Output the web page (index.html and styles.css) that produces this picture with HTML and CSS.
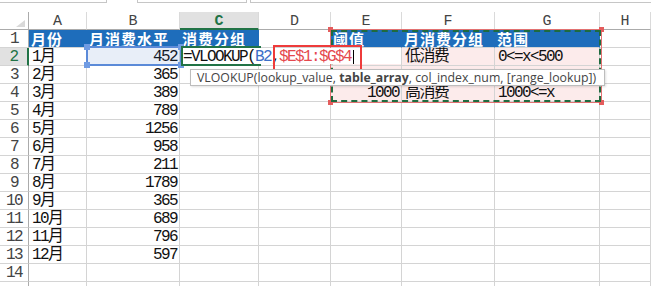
FILE: index.html
```html
<!DOCTYPE html>
<html lang="zh-CN">
<head>
<meta charset="utf-8">
<title>VLOOKUP</title>
<link rel="stylesheet" href="styles.css">
</head>
<body>
<div class="toolbar">
  <div class="tb tb-name"></div>
  <div class="tb tb-mid"></div>
  <div class="tb tb-formula"></div>
</div>
<div class="sheet">
  <div class="corner"><svg width="29" height="18" viewBox="0 0 29 18"><polygon points="25,8 25,15 16,15" fill="#d9d9d9"/></svg></div>
  <div class="hd">A</div><div class="hd">B</div><div class="hd sel">C</div><div class="hd">D</div><div class="hd">E</div><div class="hd">F</div><div class="hd">G</div><div class="hd">H</div>

  <div class="rh">1</div><div class="c th">月份</div><div class="c th">月消费水平</div><div class="c th">消费分组</div><div class="c"></div><div class="c th">阈值</div><div class="c th">月消费分组</div><div class="c th">范围</div><div class="c"></div>
  <div class="rh sel">2</div><div class="c">1月</div><div class="c num">452</div><div class="c"></div><div class="c"></div><div class="c pk"></div><div class="c pk">低消费</div><div class="c pk">0&lt;=x&lt;500</div><div class="c"></div>
  <div class="rh">3</div><div class="c">2月</div><div class="c num">365</div><div class="c"></div><div class="c"></div><div class="c pk"></div><div class="c pk"></div><div class="c pk"></div><div class="c"></div>
  <div class="rh">4</div><div class="c">3月</div><div class="c num">389</div><div class="c"></div><div class="c"></div><div class="c pk num">1000</div><div class="c pk">高消费</div><div class="c pk">1000&lt;=x</div><div class="c"></div>
  <div class="rh">5</div><div class="c">4月</div><div class="c num">789</div><div class="c"></div><div class="c"></div><div class="c"></div><div class="c"></div><div class="c"></div><div class="c"></div>
  <div class="rh">6</div><div class="c">5月</div><div class="c num">1256</div><div class="c"></div><div class="c"></div><div class="c"></div><div class="c"></div><div class="c"></div><div class="c"></div>
  <div class="rh">7</div><div class="c">6月</div><div class="c num">958</div><div class="c"></div><div class="c"></div><div class="c"></div><div class="c"></div><div class="c"></div><div class="c"></div>
  <div class="rh">8</div><div class="c">7月</div><div class="c num">211</div><div class="c"></div><div class="c"></div><div class="c"></div><div class="c"></div><div class="c"></div><div class="c"></div>
  <div class="rh">9</div><div class="c">8月</div><div class="c num">1789</div><div class="c"></div><div class="c"></div><div class="c"></div><div class="c"></div><div class="c"></div><div class="c"></div>
  <div class="rh">10</div><div class="c">9月</div><div class="c num">365</div><div class="c"></div><div class="c"></div><div class="c"></div><div class="c"></div><div class="c"></div><div class="c"></div>
  <div class="rh">11</div><div class="c">10月</div><div class="c num">689</div><div class="c"></div><div class="c"></div><div class="c"></div><div class="c"></div><div class="c"></div><div class="c"></div>
  <div class="rh">12</div><div class="c">11月</div><div class="c num">796</div><div class="c"></div><div class="c"></div><div class="c"></div><div class="c"></div><div class="c"></div><div class="c"></div>
  <div class="rh">13</div><div class="c">12月</div><div class="c num">597</div><div class="c"></div><div class="c"></div><div class="c"></div><div class="c"></div><div class="c"></div><div class="c"></div>
  <div class="rh">14</div><div class="c"></div><div class="c"></div><div class="c"></div><div class="c"></div><div class="c"></div><div class="c"></div><div class="c"></div><div class="c"></div>
  <div class="rh"></div><div class="c"></div><div class="c"></div><div class="c"></div><div class="c"></div><div class="c"></div><div class="c"></div><div class="c"></div><div class="c"></div>

  <div class="ref-range">
    <span class="rq rq-tl"></span><span class="rq rq-tr"></span><span class="rq rq-bl"></span><span class="rq rq-br"></span>
  </div>
  <div class="marquee"></div>
  <div class="ref-b2">
    <span class="bq bq-tl"></span><span class="bq bq-tr"></span><span class="bq bq-bl"></span><span class="bq bq-br"></span>
  </div>
  <div class="active"></div>
  <div class="edit">=VLOOKUP(<span class="f-blue">B2</span>,<span class="f-red">$E$1:$G$4</span><span class="caret"></span></div>
  <div class="mark"></div>
  <div class="tip">VLOOKUP(lookup_value, <b>table_array</b>, col_index_num, [range_lookup])</div>
</div>
</body>
</html>
```

FILE: styles.css
```css
html, body {
  margin: 0;
  padding: 0;
  background: #ffffff;
  overflow: hidden;
}

.toolbar {
  display: flex;
  height: 12px;
}

.tb {
  height: 2px;
  border-bottom: 1px solid #c6c6c6;
  box-sizing: content-box;
}

.tb-name {
  width: 106px;
  border-right: 1px solid #c6c6c6;
}

.tb-mid {
  width: 108px;
  margin-left: 30px;
  border-left: 1px solid #c6c6c6;
  border-right: 1px solid #c6c6c6;
}

.tb-formula {
  flex: 1;
  margin-left: 3px;
  border-left: 1px solid #c6c6c6;
}

.sheet {
  position: relative;
  display: grid;
  grid-template-columns: 29px 58px 93px 79px 72px 71px 93px 105px 51px;
  grid-auto-rows: 18px;
}

.sheet > div {
  box-sizing: border-box;
}

.corner {
  border-right: 1px solid #ababab;
  border-bottom: 1px solid #ababab;
  background: #ffffff;
}

.corner svg {
  display: block;
}

.hd {
  border-right: 1px solid #dadada;
  border-bottom: 1px solid #ababab;
  text-align: center;
  padding-top: 3px;
  font: 15px/14px "Liberation Mono", monospace;
  color: #444444;
  background: #ffffff;
}

.hd.sel {
  background: #e1e1e1;
  color: #217346;
  font-weight: bold;
  border-bottom: 2px solid #217346;
}

.rh {
  border-right: 1px solid #ababab;
  border-bottom: 1px solid #d4d4d4;
  text-align: center;
  padding-top: 2px;
  font: 16px/15px "Liberation Mono", monospace;
  letter-spacing: -1.6px;
  color: #444444;
}

.rh.sel {
  background: #e1e1e1;
  color: #217346;
  border-right: 2px solid #217346;
}

.c {
  border-right: 1px solid #d4d4d4;
  border-bottom: 1px solid #d4d4d4;
  padding: 2px 2px 0 3px;
  font: 16px/15px "Liberation Mono", "Noto Sans CJK SC", monospace;
  letter-spacing: -1.6px;
  color: #111111;
  white-space: nowrap;
}

.c.num {
  text-align: right;
  padding-right: 2px;
}

.c.th {
  background: #1e6dbb;
  border-right-color: #1e6dbb;
  color: #ffffff;
  font-weight: bold;
  font-family: "Noto Sans CJK SC", sans-serif;
  font-size: 15px;
  line-height: 16px;
  letter-spacing: 1px;
  padding: 1px 2px 0 2px;
}

.c.pk {
  background: #fcebeb;
}

/* reference range around E1:G4 */
.ref-range {
  position: absolute;
  left: 330px;
  top: 17px;
  width: 272px;
  height: 74px;
  border: 1px solid #e27272;
}

.rq {
  position: absolute;
  width: 5px;
  height: 5px;
  background: #e45c5c;
}

.rq-tl { left: -3px; top: -3px; }
.rq-tr { right: -3px; top: -3px; }
.rq-bl { left: -3px; bottom: -3px; }
.rq-br { right: -3px; bottom: -3px; }

.marquee {
  position: absolute;
  left: 331px;
  top: 18px;
  width: 270px;
  height: 72px;
  border: 2px dashed #1f6b3f;
}

/* reference to B2 */
.ref-b2 {
  position: absolute;
  left: 86px;
  top: 34px;
  width: 96px;
  height: 20px;
  border: 2px solid #5b8ad8;
  background: rgba(68, 114, 196, 0.12);
}

.bq {
  position: absolute;
  width: 6px;
  height: 6px;
  background: #6f9be3;
}

.bq-tl { left: -4px; top: -4px; }
.bq-tr { right: -4px; top: -4px; }
.bq-bl { left: -4px; bottom: -4px; }
.bq-br { right: -4px; bottom: -4px; }

.active {
  position: absolute;
  left: 181px;
  top: 34px;
  width: 80px;
  height: 20px;
  border: 2px solid #217346;
}

.edit {
  position: absolute;
  left: 183px;
  top: 36px;
  width: 218px;
  height: 16px;
  padding-top: 2px;
  box-sizing: border-box;
  background: #ffffff;
  font: 16px/14px "Liberation Mono", monospace;
  letter-spacing: -1.6px;
  color: #111111;
  white-space: nowrap;
}

.f-blue {
  color: #3d6fc8;
}

.f-red {
  color: #e5484d;
}

.caret {
  display: inline-block;
  width: 1px;
  height: 14px;
  background: #000000;
  vertical-align: -3px;
  margin-left: 2px;
}

.mark {
  position: absolute;
  left: 273px;
  top: 33px;
  width: 89px;
  height: 28px;
  border: 2px solid #ee3b3b;
  box-sizing: border-box;
}

.tip {
  position: absolute;
  left: 190px;
  top: 57px;
  width: 415px;
  height: 17px;
  padding: 0 6px;
  background: #ffffff;
  border: 1px solid #bdbdbd;
  box-shadow: 1px 1px 2px rgba(0, 0, 0, 0.12);
  font: 12.3px/15px "Open Sans", sans-serif;
  color: #444444;
  white-space: nowrap;
  box-sizing: border-box;
}

.tip b {
  font-weight: bold;
  color: #444444;
}
```
